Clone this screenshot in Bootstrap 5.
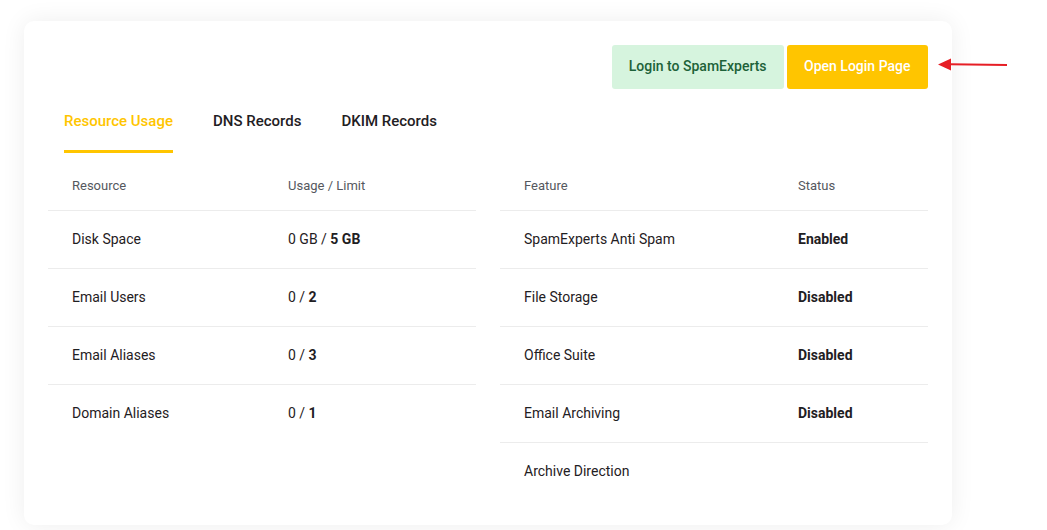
<!DOCTYPE html>
<html lang="en">

<head>
    <meta charset="UTF-8">
    <meta name="viewport" content="width=device-width, initial-scale=1.0">
    <title>Email Hosting</title>
    <link href="https://cdn.jsdelivr.net/npm/bootstrap@5.3.0/dist/css/bootstrap.min.css" rel="stylesheet">
    <style>
        html, body { height: 100%; overflow: hidden; }
        body {
            background: #fff;
            font-family: Roboto, "Liberation Sans", sans-serif;
            font-size: 14px;
            color: #1f2023;
            padding: 21px 95px 0 24px;
        }
        .panel-box {
            position: relative;
            height: 504px;
            background: #fff;
            border-radius: 10px;
            padding: 24px;
            box-shadow: 0 0 24px rgba(0, 0, 0, .07);
        }
        .btn-row { gap: 3px; }
        .btn-spam, .btn-open {
            height: 44px;
            padding: 0 17px 2px;
            font-size: 14px;
            font-weight: 500;
            line-height: 42px;
            border: 0;
            border-radius: 3px;
        }
        .btn-spam { background: #d6f4de; color: #1d6239; }
        .btn-open { padding: 0 17.5px 2px; background: #ffc500; color: #fff; }
        .tab-row { padding: 0 16px; gap: 40px; }
        .tab-row .nav-link {
            padding: 21px 0 17px;
            font-size: 15px;
            line-height: 23px;
            font-weight: 500;
            color: #1f2023;
            border-bottom: 3px solid transparent;
        }
        .tab-row .nav-link.active { color: #ffc500; border-bottom-color: #ffc500; }
        .usage-table { margin: 0; table-layout: fixed; font-size: 14px; color: #1f2023; }
        .usage-table th, .usage-table td {
            height: 58px;
            padding: 0 0 0 24px;
            vertical-align: middle;
            border-bottom: 1px solid #ececec;
            box-shadow: none;
        }
        .usage-table th {
            height: 49px;
            font-size: 13px;
            font-weight: 400;
            color: #55585e;
        }
        .usage-table tr:last-child td { border-bottom: 0; }
        .usage-table b { font-weight: 700; }
        .col-left { width: 216px; }
        .col-right { width: 274px; }
        .note-arrow { position: absolute; left: 914px; top: 37px; }
    </style>
</head>

<body>
    <div class="panel-box">
        <div class="d-flex justify-content-end btn-row">
            <button type="button" class="btn btn-spam">Login to SpamExperts</button>
            <button type="button" class="btn btn-open">Open Login Page</button>
        </div>

        <ul class="nav tab-row">
            <li class="nav-item"><a class="nav-link active" href="#">Resource Usage</a></li>
            <li class="nav-item"><a class="nav-link" href="#">DNS Records</a></li>
            <li class="nav-item"><a class="nav-link" href="#">DKIM Records</a></li>
        </ul>

        <div class="d-flex gap-4 mt-2">
            <div class="flex-fill w-50">
                <table class="table usage-table">
                    <thead>
                        <tr><th class="col-left">Resource</th><th>Usage / Limit</th></tr>
                    </thead>
                    <tbody>
                        <tr><td>Disk Space</td><td>0 GB / <b>5 GB</b></td></tr>
                        <tr><td>Email Users</td><td>0 / <b>2</b></td></tr>
                        <tr><td>Email Aliases</td><td>0 / <b>3</b></td></tr>
                        <tr><td>Domain Aliases</td><td>0 / <b>1</b></td></tr>
                    </tbody>
                </table>
            </div>
            <div class="flex-fill w-50">
                <table class="table usage-table">
                    <thead>
                        <tr><th class="col-right">Feature</th><th>Status</th></tr>
                    </thead>
                    <tbody>
                        <tr><td>SpamExperts Anti Spam</td><td><b>Enabled</b></td></tr>
                        <tr><td>File Storage</td><td><b>Disabled</b></td></tr>
                        <tr><td>Office Suite</td><td><b>Disabled</b></td></tr>
                        <tr><td>Email Archiving</td><td><b>Disabled</b></td></tr>
                        <tr><td>Archive Direction</td><td></td></tr>
                    </tbody>
                </table>
            </div>
        </div>

        <svg class="note-arrow" width="72" height="14" viewBox="0 0 72 14">
            <path d="M69 7 L12 6.2" stroke="#e61e25" stroke-width="2" fill="none"/>
            <path d="M0 6.5 L13 0.5 L13 12.5 Z" fill="#e61e25"/>
        </svg>
    </div>
</body>

</html>
